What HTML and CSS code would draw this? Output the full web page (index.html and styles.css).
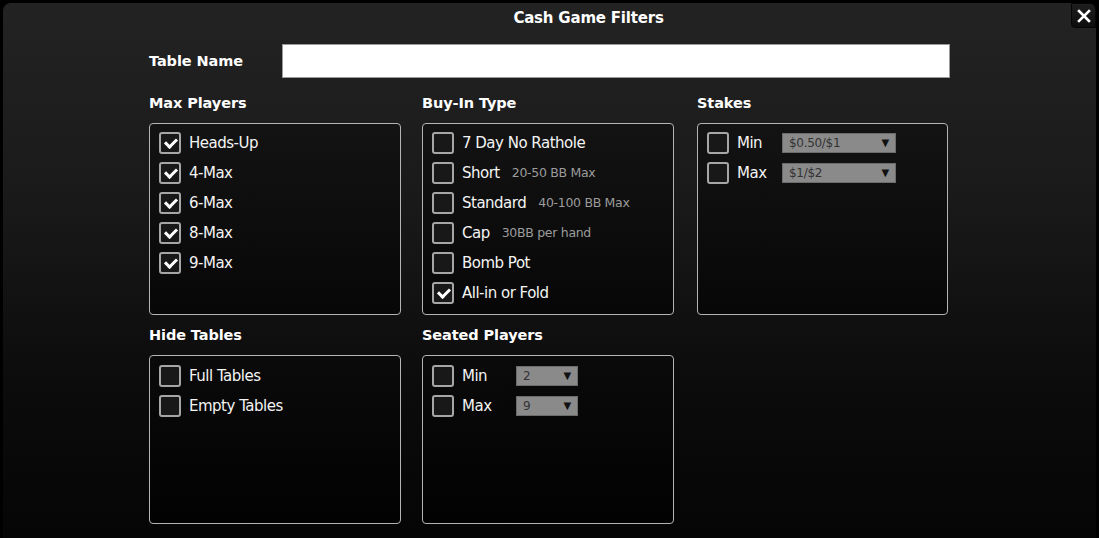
FILE: index.html
```html
<!DOCTYPE html>
<html>
<head>
<meta charset="utf-8">
<link rel="stylesheet" href="styles.css">
</head>
<body>
<div class="window">
  <div class="title">Cash Game Filters</div>
  <button class="close" aria-label="Close">
    <svg width="14" height="14" viewBox="0 0 14 14"><path d="M2 2L12 12M12 2L2 12" stroke="#fff" stroke-width="2.6" stroke-linecap="square"/></svg>
  </button>
  <div class="content">
    <div class="name-row">
      <div class="heading name-label">Table Name</div>
      <div class="name-input"></div>
    </div>
    <div class="grid">
      <div class="group">
        <div class="heading">Max Players</div>
        <div class="box tall">
          <div class="opt"><span class="cb on"></span><span class="lbl">Heads-Up</span></div>
          <div class="opt"><span class="cb on"></span><span class="lbl">4-Max</span></div>
          <div class="opt"><span class="cb on"></span><span class="lbl">6-Max</span></div>
          <div class="opt"><span class="cb on"></span><span class="lbl">8-Max</span></div>
          <div class="opt"><span class="cb on"></span><span class="lbl">9-Max</span></div>
        </div>
      </div>
      <div class="group">
        <div class="heading">Buy-In Type</div>
        <div class="box tall">
          <div class="opt"><span class="cb"></span><span class="lbl">7 Day No Rathole</span></div>
          <div class="opt"><span class="cb"></span><span class="lbl">Short</span><span class="sub">20-50 BB Max</span></div>
          <div class="opt"><span class="cb"></span><span class="lbl">Standard</span><span class="sub">40-100 BB Max</span></div>
          <div class="opt"><span class="cb"></span><span class="lbl">Cap</span><span class="sub">30BB per hand</span></div>
          <div class="opt"><span class="cb"></span><span class="lbl">Bomb Pot</span></div>
          <div class="opt"><span class="cb on"></span><span class="lbl">All-in or Fold</span></div>
        </div>
      </div>
      <div class="group">
        <div class="heading">Stakes</div>
        <div class="box tall narrowbox">
          <div class="opt"><span class="cb"></span><span class="lbl fixed-stakes">Min</span><span class="select wide"><span>$0.50/$1</span><span class="arrow">&#9660;</span></span></div>
          <div class="opt"><span class="cb"></span><span class="lbl fixed-stakes">Max</span><span class="select wide"><span>$1/$2</span><span class="arrow">&#9660;</span></span></div>
        </div>
      </div>
      <div class="group">
        <div class="heading">Hide Tables</div>
        <div class="box short">
          <div class="opt"><span class="cb"></span><span class="lbl">Full Tables</span></div>
          <div class="opt"><span class="cb"></span><span class="lbl">Empty Tables</span></div>
        </div>
      </div>
      <div class="group">
        <div class="heading">Seated Players</div>
        <div class="box short">
          <div class="opt"><span class="cb"></span><span class="lbl fixed-seated">Min</span><span class="select narrow"><span>2</span><span class="arrow">&#9660;</span></span></div>
          <div class="opt"><span class="cb"></span><span class="lbl fixed-seated">Max</span><span class="select narrow"><span>9</span><span class="arrow">&#9660;</span></span></div>
        </div>
      </div>
    </div>
  </div>
</div>
</body>
</html>
```
FILE: styles.css
```css
html, body {
  margin: 0;
  padding: 0;
  background: #000;
  height: 538px;
  overflow: hidden;
}
body {
  font-family: "DejaVu Sans", Verdana, sans-serif;
  color: #fff;
}
.window {
  position: relative;
  margin: 3px 3px 0 3px;
  height: 535px;
  border-radius: 8px 8px 0 0;
  background: linear-gradient(to bottom, #232323 0%, #1a1a1a 35%, #0c0c0c 70%, #050505 100%);
  box-sizing: border-box;
}
.title {
  height: 41px;
  line-height: 30px;
  text-align: center;
  font-weight: bold;
  font-size: 15px;
  letter-spacing: -0.2px;
  padding-left: 78px;
}
.close {
  position: absolute;
  top: 0;
  right: 0;
  width: 25px;
  height: 25px;
  padding: 0;
  border: 1px solid #050505;
  border-radius: 0 6px 0 4px;
  background: linear-gradient(to bottom, #1e1e1e, #0d0d0d);
  display: flex;
  align-items: center;
  justify-content: center;
}
.content {
  padding-left: 146px;
  width: 801px;
}
.name-row {
  display: flex;
  align-items: center;
  height: 34px;
}
.heading {
  font-weight: bold;
  font-size: 14.5px;
  letter-spacing: -0.1px;
  line-height: 20px;
  height: 20px;
}
.name-label {
  width: 133px;
  flex: none;
}
.name-input {
  flex: 1;
  height: 34px;
  box-sizing: border-box;
  background: #fff;
  border: 1px solid #9a9a9a;
}
.grid {
  display: grid;
  grid-template-columns: 273px 275px 251px;
  row-gap: 10px;
  margin-top: 15px;
}
.group .heading {
  margin-bottom: 10px;
}
.box {
  box-sizing: border-box;
  width: 252px;
  border: 1.5px solid #b4b4b4;
  border-radius: 4px;
  background: linear-gradient(to bottom, #131313, #070707);
  padding: 7.5px 9px 0 9px;
  display: flex;
  flex-direction: column;
  gap: 8px;
}
.box.narrowbox { width: 251px; }
.box.tall { height: 192px; }
.box.short {
  height: 169px;
  padding-top: 8.5px;
  background: linear-gradient(to bottom, #0a0a0a, #020202);
}
.opt {
  display: flex;
  align-items: center;
  height: 22px;
}
.cb {
  flex: none;
  width: 22px;
  height: 22px;
  box-sizing: border-box;
  border: 2px solid #a6a6a6;
  border-radius: 3px;
  background: #181818;
  margin-right: 8px;
  position: relative;
}
.cb.on::after {
  content: "";
  position: absolute;
  left: 4px;
  top: 2px;
  width: 9px;
  height: 5px;
  border-left: 3px solid #fff;
  border-bottom: 3px solid #fff;
  transform: translate(0, 2px) rotate(-45deg);
}
.lbl {
  font-size: 15px;
  letter-spacing: -0.5px;
  line-height: 20px;
  color: #f4f4f4;
}
.sub {
  margin-left: 12px;
  font-size: 12.5px;
  letter-spacing: -0.3px;
  color: #9c9c9c;
}
.fixed-stakes { width: 45px; flex: none; }
.fixed-seated { width: 54px; flex: none; }
.select {
  box-sizing: border-box;
  height: 20px;
  background: #8a8a8a;
  border: 1px solid #6c6c6c;
  display: flex;
  align-items: center;
  justify-content: space-between;
  padding: 0 6px 0 6px;
  font-size: 12px;
  letter-spacing: -0.3px;
  color: #333;
}
.select.wide { width: 114px; }
.select.narrow { width: 62px; }
.arrow {
  font-size: 10px;
  color: #111;
}
```
